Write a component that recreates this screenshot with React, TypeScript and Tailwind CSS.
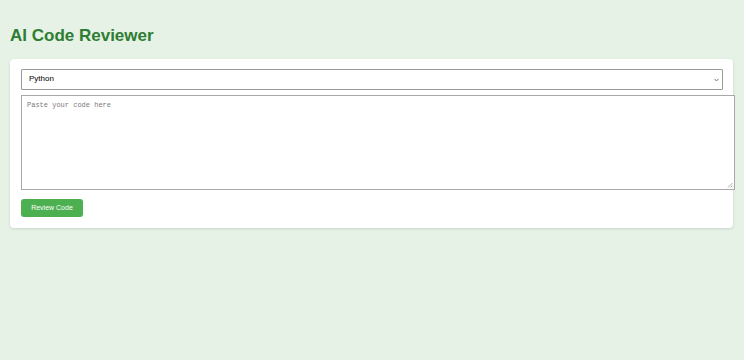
import React from "react";

export default function App() {
  return (
    <div className="min-h-[360px] w-[744px] bg-[#e5f2e5] px-[10px] pt-[25px]" style={{ fontFamily: '"Liberation Sans", Arial, sans-serif' }}>
      <h1 className="text-[17px] font-bold leading-[21px] text-[#2e7d32]">AI Code Reviewer</h1>
      <div className="mt-[13px] w-[723px] rounded-[4px] bg-white px-[11px] pb-[11px] pt-[10px] shadow-[0_1px_3px_rgba(0,0,0,0.12)]">
        <div className="relative h-[21px] w-[702px] rounded-[1px] border border-[#9a9a9a] bg-white">
          <span className="absolute left-[7px] top-[4px] text-[8px] leading-[10px] text-black">Python</span>
          <svg className="absolute right-[3px] top-[8px]" width="5" height="4" viewBox="0 0 5 4">
            <path d="M0.5 0.8 L2.5 3 L4.5 0.8" fill="none" stroke="#777" strokeWidth="1" />
          </svg>
        </div>
        <div className="relative mt-[5px] h-[95px] w-[714px] border border-[#a8a8a8] bg-white">
          <span className="absolute left-[5px] top-[5px] text-[7px] leading-[9px] text-[#7a7a7a]" style={{ fontFamily: '"Liberation Mono", "DejaVu Sans Mono", monospace' }}>Paste your code here</span>
          <svg className="absolute bottom-[1px] right-[1px]" width="6" height="6" viewBox="0 0 6 6">
            <path d="M1 5.5 L5.5 1 M3.5 5.5 L5.5 3.5" fill="none" stroke="#999" strokeWidth="0.8" />
          </svg>
        </div>
        <button className="mt-[9px] flex h-[18px] w-[62px] items-center justify-center rounded-[3px] bg-[#4caf50] text-[7px] text-white">
          Review Code
        </button>
      </div>
    </div>
  );
}
